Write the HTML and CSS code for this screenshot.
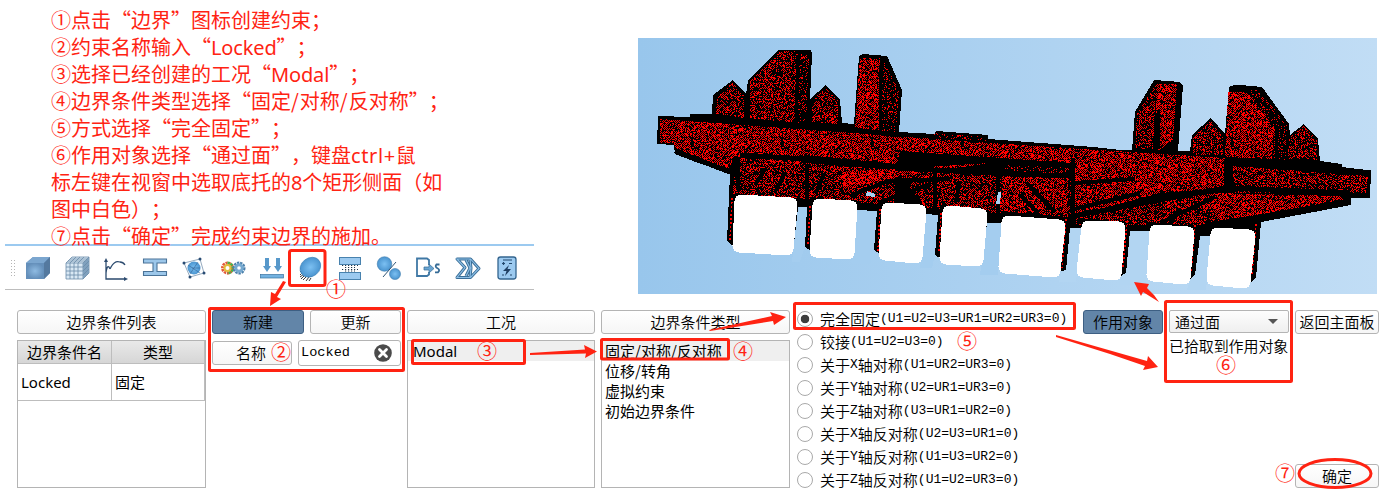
FILE: index.html
```
<!DOCTYPE html>
<html lang="zh-CN">
<head>
<meta charset="utf-8">
<title>边界条件</title>
<link rel="stylesheet" href="styles.css">
</head>
<body>
<main class="page">
  <section class="top">
    <div class="left">
      <div class="notes">
        <p>①点击“边界”图标创建约束；</p>
        <p>②约束名称输入“<span class="lat">Locked</span>”；</p>
        <p>③选择已经创建的工况“<span class="lat">Modal</span>”；</p>
        <p>④边界条件类型选择“固定<span class="sl">/</span>对称<span class="sl">/</span>反对称”；</p>
        <p>⑤方式选择“完全固定”；</p>
        <p>⑥作用对象选择“通过面”，键盘<span class="lat plus">ctrl+</span>鼠</p>
        <p>标左键在视窗中选取底托的<span class="lat">8</span>个矩形侧面（如</p>
        <p>图中白色）；</p>
        <p>⑦点击“确定”完成约束边界的施加。</p>
      </div>
      <div class="toolbar">
        <svg width="0" height="0" class="defs"><defs>
          <radialGradient id="ball"><stop offset="0" stop-color="#7cc0f2"/><stop offset="1" stop-color="#4a94cf"/></radialGradient>
          <radialGradient id="face"><stop offset="0" stop-color="#8fbbe2"/><stop offset="1" stop-color="#648fba"/></radialGradient>
        </defs></svg>
        <span class="grip"></span>
        <svg class="ic" viewBox="-14 -14 28 28"><path d="M-12-5L-5-11H12V5L6 11H-12Z" fill="#658fb9"/><path d="M-12-5L-5-11H12L6-5Z" fill="#7ba6cf"/><path d="M6-5L12-11V5L6 11Z" fill="#54799f"/><rect x="-12" y="-5" width="18" height="16" fill="url(#face)"/></svg>
        <svg class="ic" viewBox="-14 -14 28 28"><path d="M-11-5L-5-11H12V5L6 11H-11Z" fill="#d9e8f4"/><path d="M6-5L12-11V5L6 11Z" fill="#8fb0cc"/><path d="M-11-5H6V11H-11ZM-11-1H6M-11 3H6M-11 7H6M-7-5V11M-3-5V11M1-5V11M-11-5L-5-11H12L6-5M-7-5L-1-11M-3-5L3-11M1-5L7-11M-9-7H8M-7-9H10M12-11V5L6 11M8-7V9M10-9V7M6-1L12-7M6 3L12-3M6 7L12 1" fill="none" stroke="#6b8ca8" stroke-width=".8"/></svg>
        <svg class="ic" viewBox="-14 -14 28 28"><g fill="none" stroke="#2b4a6e" stroke-width="1.3"><path d="M-10-8V11H10M-10 5Q-9-3-7-1Q-6 2-5-1Q-1-8 4-6Q7-6 9-3"/></g><path d="M-12-6L-10-10L-8-6ZM8 9L12 11L8 13Z" fill="#2b4a6e"/></svg>
        <svg class="ic" viewBox="-14 -14 28 28"><path d="M-11.500-9H11.500V-5H2V3.500H11.500V7.500H-11.500V3.500H-2V-5H-11.500Z" fill="#9cc7ea" stroke="#4a7397" stroke-width="1.100"/></svg>
        <svg class="ic" viewBox="-14 -14 28 28"><path d="M-10-5L6-9L10 5L-4 9Z" fill="none" stroke="#7a94ad" stroke-width=".8"/><circle r="6.500" fill="url(#ball)"/><path d="M-6-3L6 5M-4 6L4-6M-2 0H6" stroke="#315f91" stroke-width=".6"/><g fill="#284b73"><circle cx="-10" cy="-5" r="1.500"/><circle cx="6" cy="-9" r="1.500"/><circle cx="10" cy="5" r="1.500"/><circle cx="-4" cy="9" r="1.500"/></g></svg>
        <svg class="ic" viewBox="-14 -14 28 28"><g fill="none" stroke-width="3" stroke-dasharray="2.200 .8"><circle cx="-5.500" r="5" stroke="#e4593b"/><path d="M-5.500-5A5 5 0 0 1-5.500 5" stroke="#45b548"/><circle cx="6" r="5" stroke="#4a7fab"/></g><circle cx="-5.500" r="3" fill="none" stroke="#e1bd3c" stroke-width="2"/><circle cx="6" r="3.300" fill="none" stroke="#76a9d0" stroke-width="3"/></svg>
        <svg class="ic" viewBox="-14 -14 28 28"><path d="M-7-10H-3V-2H-1L-5 4L-9-2H-7ZM4-10H8V-2H10L6 4L2-2H4Z" fill="#5798ca"/><rect x="-11.500" y="6.500" width="23" height="3.500" fill="#72b2e1" stroke="#38729f" stroke-width=".7"/></svg>
        <svg class="ic" viewBox="-14 -14 28 28"><path d="M-8 4L-11 7M-7 6L-11 9M-6 7L-10 11M-4 8L-8 12M-2 9L-5 13M0 10L-2 13M-9 2L-11 4" stroke="#333" stroke-width="1"/><ellipse cx="0" cy="-1" rx="11" ry="9.200" transform="rotate(-38)" fill="url(#ball)" stroke="#3b80b5" stroke-width=".6"/></svg>
        <svg class="ic" viewBox="-14 -14 28 28"><g fill="#9ccaf0" stroke="#4882ae"><rect x="-10.500" y="-10.500" width="21" height="7"/><rect x="-10.500" y="4.500" width="21" height="7"/></g><path d="M-8-2.500H8M-5-.5H5M-8 1.500H8M-5 3H5" stroke="#26384a" stroke-width="1" stroke-dasharray="1.200 1.800"/></svg>
        <svg class="ic" viewBox="-14 -14 28 28"><g fill="url(#ball)" stroke="#417eaf" stroke-width=".6"><circle cx="-4.500" cy="-4" r="7.300"/><circle cx="6" cy="6" r="5.500"/></g><path d="M-6 9L7-6" stroke="#315675"/></svg>
        <svg class="ic" viewBox="-14 -14 28 28"><path d="M1-3V-8L-1-9.500H-11V8H-1L1 6.500V4" fill="none" stroke="#3f78a5" stroke-width="1.800"/><path d="M-4-1H1V-4L6 .500L1 5V2H-4Z" fill="#6aa6d3" stroke="#356b96" stroke-width=".7"/><path d="M11.500-3.500H8.500Q6.500-1.500 9.500 .3Q12.500 2 10 4.300H7" fill="none" stroke="#356b96" stroke-width="1.800"/></svg>
        <svg class="ic" viewBox="-14 -14 28 28"><path d="M-11-9H2.500L11 .5L2.500 9.500H-11L-3-.5ZM2-9L3 0L2 9M-2-8L2 0L-2 8" fill="none" stroke="#3b6f98" stroke-width="3" stroke-linejoin="round"/><path d="M-11-9H2.500L11 .5L2.500 9.500H-11L-3-.5ZM2-9L3 0L2 9M-2-8L2 0L-2 8" fill="none" stroke="#8cbfe6" stroke-width="1.100"/></svg>
        <svg class="ic" viewBox="-14 -14 28 28"><rect x="-9" y="-11" width="18" height="22" rx="2.500" fill="#9ccaf0" stroke="#34658f" stroke-width="1.300"/><path d="M-4-8H5M-5-4.500H-2M-3.500-6V-3M2-4.500H5M-5 7H-3M3 7H5" stroke="#24496d" stroke-width="1.200"/><path d="M2-3L-4 3H-.500L-2 8L4 1H.500Z" fill="#203f62"/></svg>
      </div>
    </div>
    <svg class="view" viewBox="638 38 739 256">
      <defs>
        <linearGradient id="sky"><stop offset="0" stop-color="#98c6ec"/><stop offset="1" stop-color="#c1ddf5"/></linearGradient>
        <pattern id="dense" width="90" height="90" patternUnits="userSpaceOnUse"><path class="dot" data-fill=".46"/></pattern>
        <pattern id="mid" width="84" height="84" patternUnits="userSpaceOnUse"><path class="dot" data-fill=".33"/></pattern>
        <pattern id="thin" width="78" height="78" patternUnits="userSpaceOnUse"><path class="dot" data-fill=".17"/></pattern>
      </defs>
      <rect x="638" y="38" width="739" height="256" fill="url(#sky)"/>
      <path d="M658 116L690 117V114H712L713 95L733 80L746 94L748 81L779 49.500L811 50L812 54L810 99L826 85L840 100L842 123L854 124L859 56L863 54L887 56L902 90L899 132L935 134L936 131L988 135V139L1094 147L1120 150H1132L1135 112L1154 80L1180 82L1183 86L1178 151H1190L1192 135L1211 118L1225 134L1229 87L1236 84.500L1262 87L1289 124L1290 135L1304 124L1318 139L1320 161L1342 164V167L1371 170.500L1370 198H1351V205L1261 222L1256 278L1251 282L1209 240V236H1200L1195 275L1191 279L1148 245V231H1130L1126 273L1121 276L1080 240V228H1070L1066 270L1061 271L1002 240V223H987V240L940 258L935 255L938 215L926 214V240L880 254L874 250L877 211L857 210V240L810 250L805 247L807 207H798V240L731 245L727 241L730 174L693 161L675 154L674 145L657 144Z"/>
      <g fill="url(#dense)">
        <path d="M660 119L990 143L1225 158V188L1160 193L1073 216V163L900 151L897 164L805 155L800 165L675 148L674 143H660Z"/>
        <path d="M1228 92H1247L1274 128L1272 159L1225 157ZM860 58H880V130H855ZM676 148L735 155L728 171ZM842 172L990 163L900 176L843 190ZM1073 170L1170 169L1130 185L1073 195ZM1212 193L1340 196L1345 202L1209 222Z"/>
        <path d="M1156 84H1177L1173 140L1158 151L1156 100Z"/>
      </g>
      <g fill="url(#mid)">
        <path d="M750 82L780 51H796L797 124L750 120ZM717 97L733 82L744 96V121L716 118ZM812 100L826 88L838 101V124L812 122ZM1137 114L1156 84L1153 149H1135ZM1193 137L1211 121L1223 137V155H1193ZM1289 138L1304 126L1317 140V160L1288 159ZM740 158L895 170V205L738 194ZM897 171L1068 177V218L926 208ZM1076 213L1215 190L1205 225H1076ZM1233 166L1368 176L1366 193H1233ZM734 174L740 196L733 198Z"/>
      </g>
      <g fill="url(#thin)"><path d="M796 54H809L806 124L797 123ZM883 60L899 91L896 132H881ZM1249 90L1260 90L1287 126L1286 160L1275 159ZM937 133L987 137V141L930 137ZM1005 165L1072 168V214L1000 212Z"/></g>
      <g fill="none" stroke="#000">
        <path d="M716 116L747 121L810 126L843 129L900 135" stroke-width="5"/>
        <path d="M740 155L840 161M895 168L1010 174L1073 176" stroke-width="5"/>
        <path d="M675 151L730 172M1225 162L1320 169" stroke-width="5"/>
        <path d="M1073 216L1225 188L1350 193" stroke-width="5"/>
        <path d="M1073 158V225M1226 161V190M738 164V190M807 164V202M935 170V210M998 172V216" stroke-width="4"/>
        <path d="M850 196L888 181L950 179M880 202L931 184M1075 183L1135 179M1070 210L1140 193M1160 223L1215 197" stroke-width="4"/>
        <path d="M765 169L755 185M785 172L775 192M824 174L816 193M910 180L905 201M960 181L956 202M1026 182L1055 212M1020 195L1038 213M1180 209L1170 224" stroke-width="4"/>
        <path d="M746 97V120M798 55L796 123M880 65V132M1158 110V149M1276 127V163" stroke-width="3"/>
        <path d="M733 197L797 201M811 201L857 204M878 204L927 209M940 208L988 213M1001 214L1067 220M1078 221L1127 225M1148 225L1197 229M1209 228L1257 232" stroke-width="6"/>
        <path d="M1209 226L1350 201" stroke-width="5"/>
      </g>
      <path fill="#a8d0f1" d="M867 191L875 194V197L866 196ZM998 192H1001L1000 204H996Z"/>
      <g fill="#a4cdef"><path d="M798 207H807L805 247L800 262H792ZM857 210.500L877 211L874 250L870 264H852ZM926 214L938 215L935 255L932 268H920ZM987 223H1002L998 275H980Z"/></g>
      <g fill="#b2d5f2"><path d="M1070 228H1082L1076 282H1059L1062 271L1066 270ZM1130 231H1150L1146 285H1118L1122 275L1126 273ZM1200 236H1212L1206 290H1187L1191 278L1195 275Z"/></g>
      <g fill="none" stroke="#f00" stroke-width="1.500" stroke-dasharray="2 2">
        <path d="M732 198L730 240M810 206L808 245M880 209L878 251M941 213L939 253M1066 219L1062 268M1127 221L1123 268M1195 225L1191 272M1256 224L1252 275"/>
      </g>
      <g class="pads">
        <path d="M741 201L791 204L787 249L739 246ZM819 205L851 207L848 253L816 251ZM888 209L920 211L916 257L885 254ZM949 212L981 215L977 260L946 258ZM1008 222L1059 226L1054 271L1005 267ZM1088 227L1119 228L1115 274L1083 271ZM1156 231L1188 233L1184 278L1153 275ZM1217 234L1249 236L1244 282L1213 279Z"/>
      </g>
    </svg>
  </section>

  <section class="panel">
    <div class="col">
      <div class="btn">边界条件列表</div>
      <div class="box table">
        <div class="tr th"><span>边界条件名</span><span>类型</span></div>
        <div class="tr td"><span class="seg">Locked</span><span>固定</span></div>
      </div>
    </div>
    <div class="col">
      <div class="pair"><div class="btn on">新建</div><div class="btn">更新</div></div>
      <div class="pair name"><div class="btn label">名称</div>
        <div class="input"><span class="mono">Locked</span><svg width="18" height="18" viewBox="-9 -9 18 18"><circle r="8.800" fill="#4b4b4b"/><path d="M-3.500-3.500L3.500 3.500M3.500-3.500L-3.500 3.500" stroke="#fff" stroke-width="2.800" stroke-linecap="round"/></svg></div></div>
    </div>
    <div class="col">
      <div class="btn">工况</div>
      <div class="box list"><div class="sel seg">Modal</div></div>
    </div>
    <div class="col">
      <div class="btn">边界条件类型</div>
      <div class="box list types"><div class="sel">固定/对称/反对称</div><div>位移/转角</div><div>虚拟约束</div><div>初始边界条件</div></div>
    </div>
    <div class="radios">
      <div class="radio checked"><i></i>完全固定<span class="mono">(U1=U2=U3=UR1=UR2=UR3=0)</span></div>
      <div class="radio"><i></i>铰接<span class="mono">(U1=U2=U3=0)</span></div>
      <div class="radio"><i></i>关于<span class="mono">X</span>轴对称<span class="mono">(U1=UR2=UR3=0)</span></div>
      <div class="radio"><i></i>关于<span class="mono">Y</span>轴对称<span class="mono">(U2=UR1=UR3=0)</span></div>
      <div class="radio"><i></i>关于<span class="mono">Z</span>轴对称<span class="mono">(U3=UR1=UR2=0)</span></div>
      <div class="radio"><i></i>关于<span class="mono">X</span>轴反对称<span class="mono">(U2=U3=UR1=0)</span></div>
      <div class="radio"><i></i>关于<span class="mono">Y</span>轴反对称<span class="mono">(U1=U3=UR2=0)</span></div>
      <div class="radio"><i></i>关于<span class="mono">Z</span>轴反对称<span class="mono">(U1=U2=UR3=0)</span></div>
    </div>
    <div class="col"><div class="btn on">作用对象</div></div>
    <div class="col target"><div class="combo">通过面<b></b></div><div class="status">已拾取到作用对象</div></div>
    <div class="col last"><div class="btn">返回主面板</div><div class="btn">确定</div></div>
  </section>

  <svg class="marks" viewBox="0 0 1391 495">
    <g fill="none" stroke="#ff2312" stroke-width="3">
      <rect x="289.500" y="250.500" width="35.500" height="35" rx="2"/>
      <rect x="209.500" y="308.500" width="194" height="62" rx="1"/>
      <rect x="412.500" y="340.500" width="112" height="23" rx="1"/>
      <rect x="601.500" y="339.500" width="127" height="19.500" rx="1"/>
      <rect x="794.500" y="303.500" width="280" height="25" rx="1"/>
      <rect x="1165.500" y="301.500" width="126" height="80" rx="1"/>
      <ellipse cx="1335" cy="473.500" rx="36" ry="14"/>
    </g>
    <g fill="#ff2312">
      <path d="M286 282L277 297L281 299L270 306L271 292L275 294L283 281Z"/>
      <path d="M530 353L585 349.500L584 345L597 351.500L585 358L586 353.500L530 355Z"/>
      <path d="M709 330L772 316L770 312L786 317L774 325L773 321L710 331Z"/>
      <path d="M1056 335L1147 361L1148 356L1158 367L1143 370L1145 366L1110 354L1056 337Z"/>
      <path d="M1159 302L1143 292L1141 296L1134 282L1149 284L1147 288L1154 295Z"/>
    </g>
    <g class="nums">
      <text x="336" y="297">①</text><text x="281" y="360">②</text><text x="487" y="359">③</text><text x="743" y="359">④</text><text x="967" y="349">⑤</text><text x="1226" y="373">⑥</text><text x="1285" y="481">⑦</text>
    </g>
  </svg>
</main>
<script src="mesh.js"></script>
</body>
</html>
```

FILE: styles.css
```
* { box-sizing: border-box; }
body { margin: 0; background: #fff; color: #000; font: 350 15px/20px "Noto Sans CJK SC", sans-serif; text-spacing-trim: space-all; }
.page { position: relative; width: 1391px; height: 495px; overflow: hidden; }
.top { display: flex; justify-content: space-between; height: 310px; padding: 0 14px 0 5px; }
.left { width: 529px; }
.notes { height: 244px; padding: 6px 0 0 46px; color: #ff2312; font-size: 20px; font-weight: 400; line-height: 27px; white-space: nowrap; position: relative; z-index: 1; }
.notes p { margin: 0; height: 27px; }
.lat { font-family: "Noto Sans", sans-serif; letter-spacing: -.15px; line-height: 20px; }
.plus { letter-spacing: .6px; }
.sl { letter-spacing: 1px; }
.toolbar { display: flex; align-items: center; height: 46px; border-top: 2px solid #9ccaf0; border-bottom: 1px solid #bdbdbd; padding-left: 5px; }
.defs { position: absolute; }
.grip { width: 5px; height: 17px; margin-right: 8.500px; background: radial-gradient(circle, #b5b5b5 .7px, transparent .9px) 0 0 / 3px 3px; }
.ic { width: 28px; height: 28px; margin-right: 11.100px; flex: none; }
.view { width: 739px; height: 256px; margin-top: 38px; shape-rendering: crispEdges; }
.dot { fill: #f00; }
.pads { fill: #fff; stroke: #fff; stroke-width: 13px; stroke-linejoin: round; }

.panel { display: grid; grid-template-columns: 189px 189px 188px 189px 281px 80px 120px 84px; grid-template-rows: 178px; column-gap: 6px; padding-left: 17px; }
.col { display: flex; flex-direction: column; gap: 6px; }
.btn { display: flex; align-items: center; justify-content: center; height: 24px; flex: none; border: 1px solid #b4b4b4; border-radius: 3px; background: linear-gradient(#fff, #f6f6f6); white-space: nowrap; }
.btn.on { background: #6285a8; border-color: #3d5f83; }
.pair { display: grid; grid-template-columns: 92px 91px; gap: 6px; }
.pair.name { grid-template-columns: 80px 103px; align-items: center; }
.label { justify-content: flex-end; padding-right: 25px; }
.input { display: flex; align-items: center; justify-content: space-between; height: 26px; border: 1px solid #b4b4b4; border-radius: 3px; padding: 0 8px 0 2px; }
.mono { font: 400 13px/20px "Liberation Mono", monospace; }
.input .mono { font-size: 13.600px; }
.box { height: 148px; border: 1px solid #b4b4b4; font-weight: 400; }
.tr { display: grid; grid-template-columns: 94px 93px; }
.tr span { border-right: 1px solid #bdbdbd; border-bottom: 1px solid #bdbdbd; display: flex; align-items: center; }
.th span { height: 23px; justify-content: center; background: linear-gradient(#e9e9e9, #d6d6d6); }
.td span { height: 37px; padding-left: 3px; }
.seg { font-family: "Noto Sans", sans-serif; }
.list > div { height: 20px; padding-left: 5px; }
.types > div { padding-left: 3px; }
.list .sel { background: #efefef; }
.radios { padding: 0 0 0 1px; margin-top: -3px; }
.radio { display: flex; align-items: center; height: 23px; white-space: nowrap; }
.radio i { width: 16px; height: 16px; border: 1px solid #a9a9a9; border-radius: 50%; margin-right: 7px; }
.checked i { background: radial-gradient(circle, #3d3d3d 4px, #fff 4.600px); }
.target { gap: 3px; }
.combo { display: flex; justify-content: space-between; align-items: center; height: 23px; border: 1px solid #b4b4b4; border-radius: 2px; background: linear-gradient(#fdfdfd, #efefef); padding: 0 10px 0 5px; }
.combo b { border: 5px solid transparent; border-top-color: #555; border-bottom: 0; }
.status { white-space: nowrap; letter-spacing: -.1px; }
.last { justify-content: space-between; }
.marks { position: absolute; left: 0; top: 0; width: 1391px; height: 495px; z-index: 2; }
.nums { fill: #ff2312; font-size: 20px; font-weight: 400; text-anchor: middle; }
```

FILE: mesh.js
```
// Fills the mesh patterns with small dots, from a fixed seed.
let seed = 7;
function rand() {
  seed = (seed * 16807) % 2147483647;
  return seed / 2147483647;
}
document.querySelectorAll('.dot').forEach((path) => {
  const size = Number(path.parentNode.getAttribute('width'));
  const fill = Number(path.dataset.fill);
  let d = '';
  for (let y = 0; y < size; y++) {
    for (let x = 0; x < size; x++) {
      const p = (x + y) % 2 ? fill * 1.5 : fill * 0.5;
      if (rand() < p) d += `M${x} ${y}h1v1h-1z`;
    }
  }
  path.setAttribute('d', d);
});
```
